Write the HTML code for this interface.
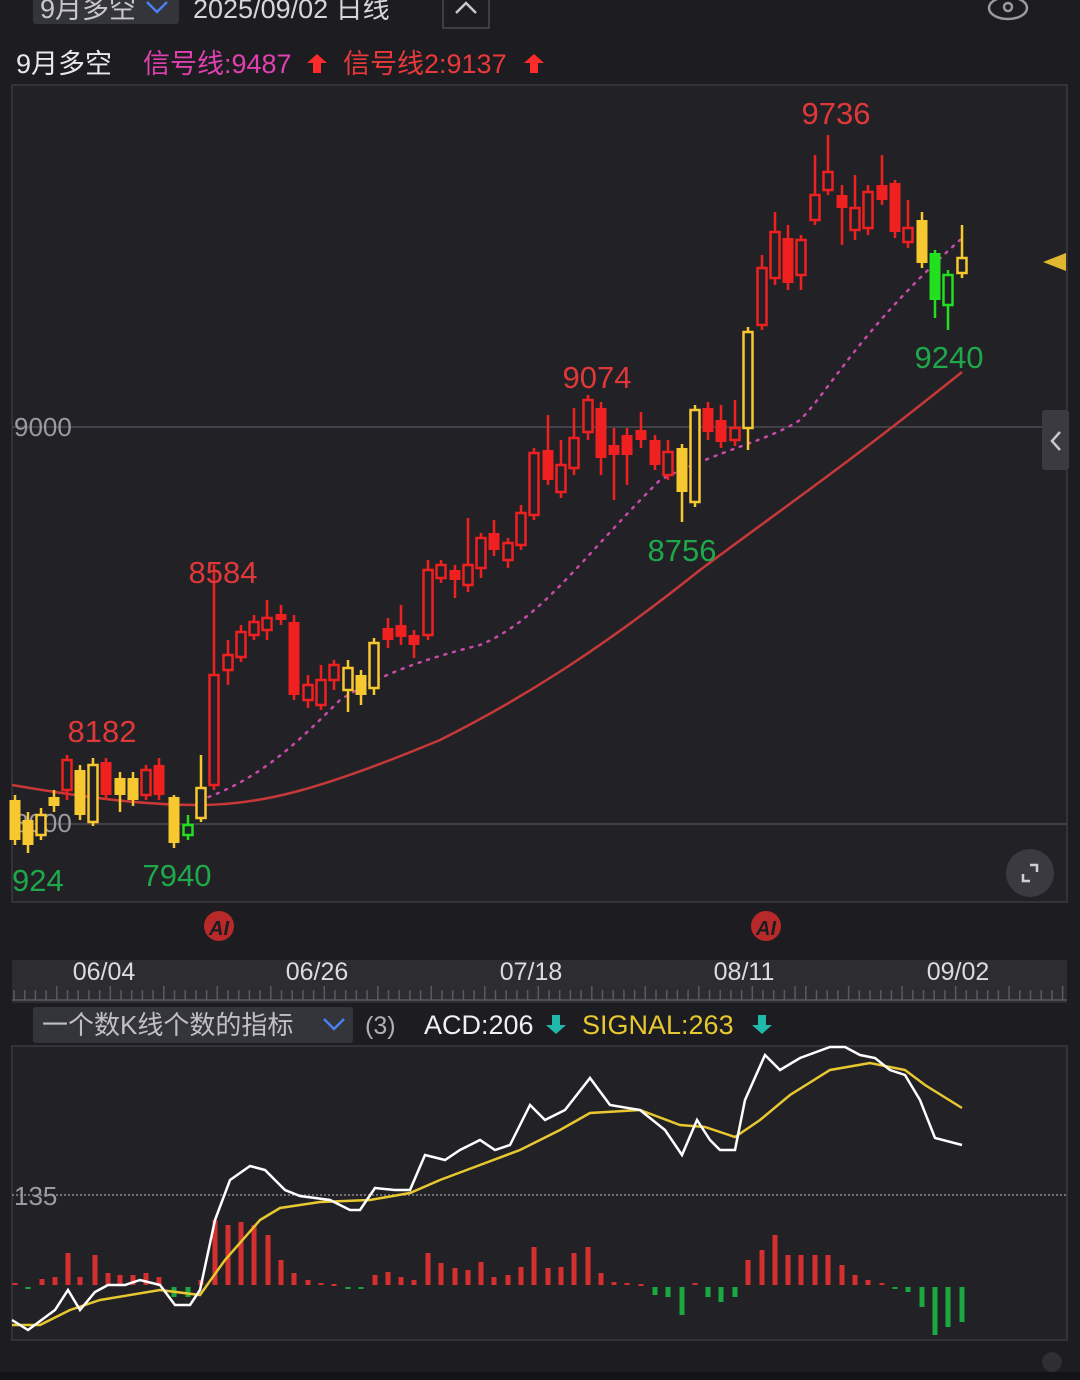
<!DOCTYPE html>
<html><head><meta charset="utf-8"><style>
body{margin:0;background:#1d1d21;width:1080px;height:1380px;overflow:hidden;font-family:"Liberation Sans","Noto Sans CJK SC",sans-serif}
</style></head><body>
<svg id="s" width="1080" height="1380" xmlns="http://www.w3.org/2000/svg" style="position:absolute;left:0;top:0">
<rect width="1080" height="1380" fill="#1d1d21"/>
<!-- header -->
<rect x="33" y="-10" width="146" height="34" rx="3" fill="#34353a"/>
<text x="40" y="18" font-size="27" fill="#c8c8cc" font-family="Liberation Sans,Noto Sans CJK SC,sans-serif">9月多空</text>
<path d="M147 2 L157 12 L167 2" stroke="#4a7ff0" stroke-width="2.5" fill="none"/>
<text x="193" y="18" font-size="27" fill="#d6d6d9" font-family="Liberation Sans,Noto Sans CJK SC,sans-serif">2025/09/02  日线</text>
<rect x="443" y="-10" width="46" height="38" fill="none" stroke="#48484e" stroke-width="1.5"/>
<path d="M456 13 L466 3 L476 13" stroke="#c8c8cc" stroke-width="2.5" fill="none"/>
<ellipse cx="1008" cy="8" rx="19" ry="11" fill="none" stroke="#9a9aa0" stroke-width="2.5"/>
<circle cx="1008" cy="7" r="4" fill="none" stroke="#9a9aa0" stroke-width="2.5"/>
<text x="16" y="73" font-size="27" fill="#e8e8ea" font-family="Liberation Sans,Noto Sans CJK SC,sans-serif">9月多空</text>
<text x="143" y="73" font-size="27" fill="#e040b0" font-family="Liberation Sans,Noto Sans CJK SC,sans-serif">信号线:9487</text>
<path d="M317 54 L327 63 L321 63 L321 73 L313 73 L313 63 L307 63Z" fill="#ff2a2a"/>
<text x="343" y="73" font-size="27" fill="#e83a3a" font-family="Liberation Sans,Noto Sans CJK SC,sans-serif">信号线2:9137</text>
<path d="M534 54 L544 63 L538 63 L538 73 L530 73 L530 63 L524 63Z" fill="#ff2a2a"/>
<!-- main chart -->
<rect x="12" y="85" width="1055" height="817" fill="#222226" stroke="#3a3a3f" stroke-width="1.5"/>
<line x1="12" y1="427" x2="1067" y2="427" stroke="#4a4a50" stroke-width="1.5"/>
<line x1="12" y1="824" x2="1067" y2="824" stroke="#4a4a50" stroke-width="1.5"/>
<text x="14" y="436" font-size="26" fill="#9a9aa0">9000</text>
<text x="14" y="832" font-size="26" fill="#9a9aa0">8000</text>
<rect x="1042" y="410" width="27" height="60" rx="3" fill="#3a3a40"/>
<path d="M1060 432 L1052 441 L1060 450" stroke="#c8c8cc" stroke-width="2.5" fill="none"/>
<path d="M1043 262 L1066 253 L1066 271Z" fill="#e0b830"/>
<circle cx="1030" cy="873" r="24" fill="#3a3a40"/>
<path d="M1023 874 v7 h7 M1037 872 v-7 h-7" stroke="#d0d0d4" stroke-width="2.5" fill="none"/>
<path d="M12 785 C100 800 150 805 200 805 C260 805 320 790 440 740 C520 700 600 650 700 570 C780 510 840 470 962 372" stroke="#c83838" stroke-width="2.5" fill="none"/>
<path d="M200 800 C260 780 300 740 340 700 C380 675 420 660 480 645 C540 620 580 560 660 480 C720 450 770 440 800 420 C830 390 860 330 960 240" stroke="#c84aa8" stroke-width="2.5" stroke-dasharray="2 7" stroke-linecap="round" fill="none"/>
<g id="candles"></g>
<g font-size="31" font-family="Liberation Sans,sans-serif">
<text x="836" y="124" fill="#e03838" text-anchor="middle">9736</text>
<text x="597" y="388" fill="#e03838" text-anchor="middle">9074</text>
<text x="223" y="583" fill="#e03838" text-anchor="middle">8584</text>
<text x="102" y="742" fill="#e03838" text-anchor="middle">8182</text>
<text x="949" y="368" fill="#1fa84a" text-anchor="middle">9240</text>
<text x="682" y="561" fill="#1fa84a" text-anchor="middle">8756</text>
<text x="177" y="886" fill="#1fa84a" text-anchor="middle">7940</text>
<text x="12" y="891" fill="#1fa84a">924</text>
</g>
<circle cx="219" cy="926" r="15" fill="#b82a2a"/><text x="219" y="935" font-size="20" font-style="italic" font-weight="bold" fill="#1d1d21" text-anchor="middle">AI</text>
<circle cx="766" cy="926" r="15" fill="#b82a2a"/><text x="766" y="935" font-size="20" font-style="italic" font-weight="bold" fill="#1d1d21" text-anchor="middle">AI</text>
<!-- date axis -->
<rect x="12" y="960" width="1055" height="43" fill="#2c2c31"/>
<g font-size="25" fill="#dcdce0" text-anchor="middle">
<text x="104" y="980">06/04</text><text x="317" y="980">06/26</text><text x="531" y="980">07/18</text><text x="744" y="980">08/11</text><text x="958" y="980">09/02</text></g>
<g id="ticks"></g>
<!-- indicator header -->
<rect x="33" y="1007" width="320" height="36" rx="3" fill="#34353a"/>
<text x="42" y="1034" font-size="26" fill="#c0c0c4" font-family="Liberation Sans,Noto Sans CJK SC,sans-serif">一个数K线个数的指标</text>
<path d="M324 1019 L334 1029 L344 1019" stroke="#4a7ff0" stroke-width="2.5" fill="none"/>
<text x="365" y="1034" font-size="25" fill="#b0b0b4">(3)</text>
<text x="424" y="1034" font-size="27" fill="#f0f0f2">ACD:206</text>
<path d="M556 1034 L546 1025 L552 1025 L552 1015 L560 1015 L560 1025 L566 1025Z" fill="#20b8a8"/>
<text x="582" y="1034" font-size="27" fill="#e8c830">SIGNAL:263</text>
<path d="M762 1034 L752 1025 L758 1025 L758 1015 L766 1015 L766 1025 L772 1025Z" fill="#20b8a8"/>
<!-- indicator panel -->
<rect x="12" y="1046" width="1055" height="294" fill="#222226" stroke="#3a3a3f" stroke-width="1.5"/>
<line x1="12" y1="1195" x2="1067" y2="1195" stroke="#707076" stroke-width="2" stroke-dasharray="2 2"/>
<text x="14" y="1205" font-size="26" fill="#9a9aa0">135</text>
<g id="hist"></g>
<polyline fill="none" stroke="#e8c830" stroke-width="2.5" points="12,1325 40,1325 70,1310 100,1300 160,1290 200,1295 225,1260 260,1220 280,1208 320,1202 370,1200 410,1193 440,1180 480,1165 520,1150 560,1130 590,1113 640,1110 680,1125 705,1127 735,1137 760,1120 790,1095 830,1070 870,1063 905,1070 925,1085 962,1108"/>
<polyline fill="none" stroke="#ffffff" stroke-width="2.5" points="12,1320 28,1330 55,1310 68,1290 80,1310 95,1292 108,1285 125,1285 140,1280 160,1285 175,1305 190,1305 200,1290 215,1220 230,1180 250,1166 265,1170 285,1190 300,1196 330,1200 350,1210 360,1210 375,1188 395,1190 410,1190 425,1155 445,1160 460,1150 480,1140 495,1150 510,1145 530,1105 545,1120 565,1110 590,1078 610,1105 640,1110 665,1130 682,1155 697,1120 710,1140 720,1150 735,1150 745,1100 765,1055 780,1070 800,1058 830,1047 845,1047 860,1055 875,1058 890,1070 905,1075 920,1100 935,1138 962,1145"/>
<rect x="0" y="1372" width="1080" height="8" fill="#141416"/>
<circle cx="1052" cy="1362" r="10" fill="#2e2e33"/>
</svg>
<script>
var NS="http://www.w3.org/2000/svg";
function el(p,t,a){var e=document.createElementNS(NS,t);for(var k in a)e.setAttribute(k,a[k]);p.appendChild(e);return e;}
var C={r:"#f02020",y:"#f8c830",g:"#20e020"};
// x, top, bottom, high, low, color, hollow
var d=[[15,800,840,795,845,'y',0],[28,820,845,812,853,'y',0],[41,815,835,808,840,'y',1],[54,797,806,790,812,'y',0],[67,760,790,755,800,'r',1],[80,770,815,765,820,'y',0],[93,765,822,758,826,'y',1],[106,762,795,758,800,'r',0],[120,778,795,772,812,'y',0],[133,778,800,772,806,'y',0],[146,770,795,765,800,'r',1],[159,765,795,758,800,'r',0],
[174,797,843,795,848,'y',0],[188,825,835,815,840,'g',1],[201,788,818,755,822,'y',1],[214,675,785,565,790,'r',1],[228,655,670,640,685,'r',1],[241,632,657,625,662,'r',1],[254,622,635,615,640,'r',1],[267,618,630,600,640,'r',1],[281,614,620,605,625,'r',0],[294,622,695,615,700,'r',0],[308,685,700,675,708,'r',1],[321,680,705,665,710,'r',1],[334,665,680,660,690,'r',1],[348,668,690,660,712,'y',1],[361,675,695,670,705,'y',0],[374,643,688,638,695,'y',1],
[388,628,640,618,648,'r',0],[401,625,637,605,645,'r',0],[414,635,645,630,658,'r',0],[428,570,635,560,640,'r',1],[441,565,578,560,583,'r',1],[455,570,580,565,598,'r',0],[468,565,585,518,592,'r',1],[481,538,568,533,578,'r',1],[494,533,550,520,556,'r',0],[508,543,560,538,568,'r',1],[521,513,545,505,550,'r',1],[534,453,515,448,520,'r',1],[548,450,480,415,485,'r',0],[561,465,492,440,498,'r',1],[574,438,468,408,475,'r',1],[588,400,432,395,440,'r',1],[601,408,458,402,475,'r',0],[614,445,455,428,500,'r',0],[627,435,455,428,485,'r',0],[641,430,440,412,448,'r',0],
[655,440,465,435,470,'r',0],[668,452,475,440,480,'r',1],[682,448,492,444,522,'y',0],[695,410,502,405,507,'y',1],[708,408,432,402,440,'r',0],[721,420,442,405,448,'r',0],[735,428,440,400,446,'r',1],[748,332,428,327,450,'y',1],[762,268,325,255,330,'r',1],[775,232,278,212,285,'r',1],[788,238,283,225,290,'r',0],[801,240,275,235,290,'r',1],[815,195,220,155,225,'r',1],[828,172,190,135,195,'r',1],[842,195,208,185,245,'r',0],[855,208,230,175,240,'r',1],[868,192,228,185,235,'r',1],[882,185,200,155,205,'r',0],[895,183,232,180,238,'r',0],[908,228,242,200,248,'r',1],[922,220,263,212,268,'y',0],[935,253,300,250,318,'g',0],[948,275,305,270,330,'g',1],[962,258,273,225,278,'y',1]];
var g=document.getElementById("candles");
d.forEach(function(c){var col=C[c[5]];el(g,"line",{x1:c[0],x2:c[0],y1:c[3],y2:c[4],stroke:col,"stroke-width":2.5});
if(c[6])el(g,"rect",{x:c[0]-4.5,y:c[1],width:9,height:c[2]-c[1],fill:"#222226",stroke:col,"stroke-width":2.5});
else el(g,"rect",{x:c[0]-5.5,y:c[1],width:11,height:c[2]-c[1],fill:col});});
var t=document.getElementById("ticks");
for(var x=14;x<1066;x+=10.7)el(t,"line",{x1:x,x2:x,y1:x%53<11?986:990,y2:1000,stroke:"#5a5a60","stroke-width":1.5});
el(t,"line",{x1:12,x2:1067,y1:1000,y2:1000,stroke:"#5a5a60","stroke-width":1.5});
var h=[[15,2],[28,-1],[42,6],[55,8],[68,32],[80,8],[95,30],[108,12],[120,10],[133,10],[146,12],[159,8],[174,-10],[188,-10],[201,5],[215,65],[228,60],[241,63],[254,60],[268,50],[281,25],[294,12],[308,5],[321,2],[334,1],[348,-1],[361,-1],[375,10],[388,13],[401,8],[414,5],[428,32],[441,22],[455,17],[468,15],[481,23],[494,8],[508,10],[521,18],[534,38],[548,17],[561,18],[574,32],[588,38],[601,12],[614,3],[627,2],[641,1],[655,-8],[668,-10],[682,-28],[695,2],[708,-10],[721,-15],[735,-10],[748,25],[762,35],[775,50],[788,30],[801,30],[815,30],[828,30],[842,20],[855,10],[868,5],[882,2],[895,-2],[908,-5],[922,-20],[935,-48],[948,-40],[962,-35]];
var hg=document.getElementById("hist");
h.forEach(function(b){var v=b[1];el(hg,"rect",{x:b[0]-2.5,y:v>0?1285-v:1287,width:5,height:Math.max(Math.abs(v),2),fill:v>0?"#d43030":"#1aa840"});});
</script>
</body></html>
